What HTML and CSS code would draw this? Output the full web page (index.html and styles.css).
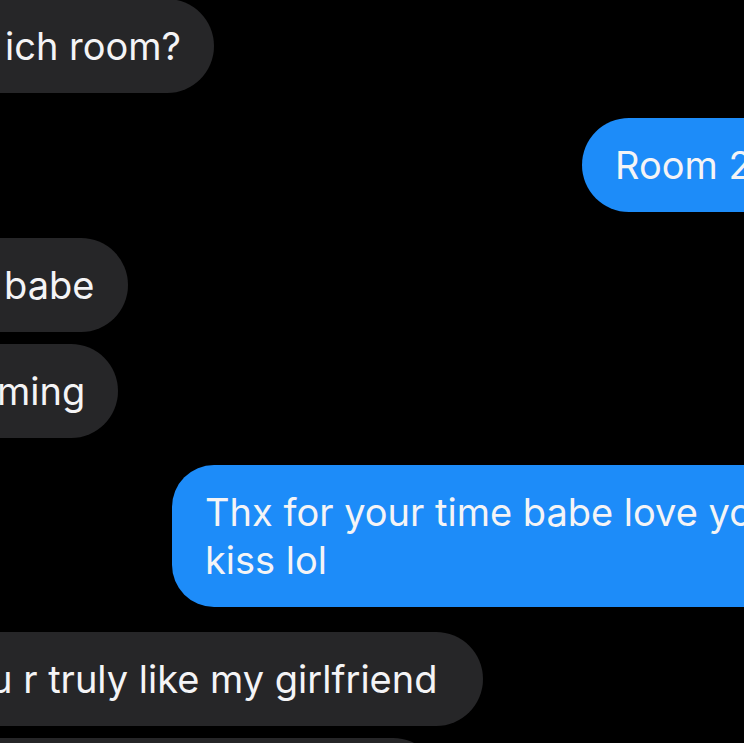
FILE: index.html
```html
<!DOCTYPE html>
<html lang="en">
<head>
  <meta charset="UTF-8">
  <meta name="viewport" content="width=device-width, initial-scale=1.0">
  <title>Messages</title>
  <link rel="stylesheet" href="styles.css">
</head>
<body>
  <div id="thread">
    <div class="bubble in first r1">ich room?</div>
    <div class="bubble out s1">Room 2</div>
    <div class="bubble in r3">babe</div>
    <div class="bubble in same r4">ming</div>
    <div class="bubble out s2">Thx for your time babe love yo<br>kiss lol</div>
    <div class="bubble in r6">u r truly like my girlfriend</div>
    <div class="bubble in same r7"></div>
  </div>
</body>
</html>
```

FILE: styles.css
```css
html,body {
  margin: 0;
  padding: 0;
  overflow: hidden;
  background: #000;
}
#thread {
  display: flex;
  flex-direction: column;
  align-items: flex-start;
  width: 100vw;
  height: 100vh;
  overflow: hidden;

  font-family: Inter, "Liberation Sans", sans-serif;
  font-size: 38px;
  line-height: 48px;
  color: #f4f4f6;
}
.bubble {
  box-sizing: border-box;
  min-height: 94px;
  padding: 23px 33px;
  border-radius: 47px;
  white-space: nowrap;
  margin-top: 25px;
  flex-shrink: 0;
}
.bubble.same {
  margin-top: 12px;
}
.bubble.first {
  margin-top: -1px;
}

/* received: left side runs off the screen */
.in {
  background-color: #262628;
  margin-left: -80px;
}
.r1 { padding-left: 85px; }
.r3 { padding-left: 84px; padding-right: 34px; margin-top: 26px; }
.r4 { padding-left: 77px; }
.r6 { padding-left: 70px; padding-right: 46px; }
.r7 { width: 520px; }

/* sent: right side runs off the screen */
.out {
  background-color: #1d8cf9;
  width: 800px;
}
.s1 { margin-left: 582px; }
.s2 {
  margin-left: 172px;
  margin-top: 27px;
  border-radius: 42px;
}
```
